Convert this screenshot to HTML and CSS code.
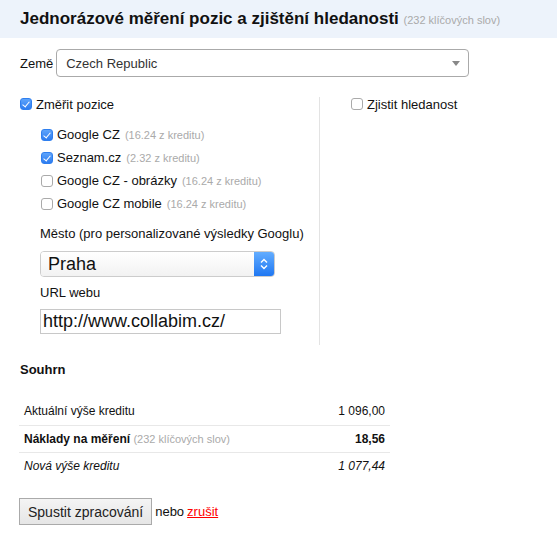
FILE: index.html
```html
<html lang="cs">
<head>
    <meta charset="UTF-8">
    <meta name="viewport" content="width=device-width, initial-scale=1.0">
    <title>Jednorázové měření</title>

    <link rel="stylesheet" href="styles.css">
</head>
<body>

    <div class="header">
        <h2 class="title">Jednorázové měření pozic a zjištění hledanosti <small>(232 klíčových slov)</small></h2>
    </div>

    <form id="form" class="form" autocomplete="off">

        <div class="countryRow">
            <label for="country">Země</label>
            <div class="countrySelect">
                <select id="country">
                    <option>Czech Republic</option>
                </select>
                <span class="arrow"></span>
            </div>
        </div>

        <div class="columns">
            <div class="colLeft">
                <label class="check top"><input type="checkbox" checked> Změřit pozice</label>

                <div class="engines">
                    <label class="check"><input type="checkbox" checked> Google CZ <small>(16.24 z kreditu)</small></label>
                    <label class="check"><input type="checkbox" checked> Seznam.cz <small>(2.32 z kreditu)</small></label>
                    <label class="check"><input type="checkbox"> Google CZ - obrázky <small>(16.24 z kreditu)</small></label>
                    <label class="check"><input type="checkbox"> Google CZ mobile <small>(16.24 z kreditu)</small></label>
                </div>

                <div class="field">
                    <label for="city">Město (pro personalizované výsledky Googlu)</label>
                    <div class="citySelect">
                        <select id="city">
                            <option>Praha</option>
                        </select>
                        <span class="stepper">
                            <svg width="10" height="14" viewBox="0 0 10 14">
                                <path d="M2 5.5 L5 2.5 L8 5.5 M2 8.5 L5 11.5 L8 8.5" fill="none" stroke="#fff" stroke-width="1.4"/>
                            </svg>
                        </span>
                    </div>
                </div>

                <div class="field">
                    <label for="url">URL webu</label>
                    <input type="text" id="url" class="url" value="http://www.collabim.cz/">
                </div>
            </div>

            <div class="colRight">
                <label class="check top"><input type="checkbox"> Zjistit hledanost</label>
            </div>
        </div>

        <h3 class="subtitle">Souhrn</h3>

        <table class="summary">
            <tr>
                <td>Aktuální výše kreditu</td>
                <td class="num">1 096,00</td>
            </tr>
            <tr class="strong">
                <td>Náklady na měření <small>(232 klíčových slov)</small></td>
                <td class="num">18,56</td>
            </tr>
            <tr class="italic">
                <td>Nová výše kreditu</td>
                <td class="num">1 077,44</td>
            </tr>
        </table>

        <div class="actions">
            <input type="submit" id="sub" value="Spustit zpracování">
            nebo <a href="#" class="cancel">zrušit</a>
        </div>

    </form>

</body>
</html>
```

FILE: styles.css
```css
body{
    margin: 0;
    font-family: "Liberation Sans", Arial, sans-serif;
    font-size: 13px;
    color: #111;
    background: #fff;
}
small{color: #aaa;
    font-size: 11px;}

.header{
    height: 38px;
    padding: 0 20px;
    background-color: #edf3fb;
    display: flex;
    align-items: center;
}
.header .title{
    margin: 0;
    font-size: 17px;
    color: #111;
}
.header .title small{font-weight: normal;}

.form{padding: 0 20px;}

.countryRow{
    display: flex;
    align-items: center;
    gap: 3px;
    margin-top: 11px;
}
.countrySelect{
    position: relative;
    width: 413px;
}
.countrySelect select{
    width: 100%;
    height: 28px;
    padding: 0 9px;
    border: 1px solid #aaa;
    border-radius: 4px;
    background: #fff;
    font-family: inherit;
    font-size: 13px;
    color: #333;
    appearance: none;
    outline: none;
}
.countrySelect .arrow{
    position: absolute;
    right: 9px;
    top: 12px;
    border-left: 4px solid transparent;
    border-right: 4px solid transparent;
    border-top: 5px solid #888;
}

.columns{
    display: flex;
    margin-top: 20px;
}
.colLeft{
    width: 299px;
    height: 248px;
    border-right: 1px solid #e3e3e3;
}
.colRight{padding-left: 31px;}

.check{
    display: flex;
    align-items: center;
    height: 23px;
    gap: 4px;
}
.check small{margin-left: 1px;}
.check.top{height: 14px;}
.check input{
    appearance: none;
    margin: 0;
    width: 12px;
    height: 12px;
    border: 1px solid #aaa;
    border-radius: 3px;
    background: #fff;
    position: relative;
}
.check input:checked{
    border-color: #2f7fef;
    background: linear-gradient(#5ea4fb, #2d7cf0);
}
.check input:checked::after{
    content: "";
    position: absolute;
    left: 3px;
    top: 1px;
    width: 3px;
    height: 6px;
    border: solid #fff;
    border-width: 0 1.5px 1.5px 0;
    transform: rotate(40deg);
}

.engines{
    margin: 12px 0 0 21px;
}

.field{margin: 11px 0 0 20px;}
.field label{display: block;
    margin-bottom: 10px;}
.field + .field label{margin-bottom: 9px;}
.field + .field{margin-top: 8px;}

.citySelect{
    display: flex;
    width: 233px;
    height: 24px;
    border: 1px solid #ccc;
    border-radius: 4px;
    overflow: hidden;
}
.citySelect select{
    flex: 1;
    border: none;
    padding: 0 7px;
    background: linear-gradient(#fff, #f2f2f2);
    font-family: inherit;
    font-size: 18px;
    color: #111;
    appearance: none;
    outline: none;
}
.citySelect .stepper{
    width: 20px;
    display: flex;
    align-items: center;
    justify-content: center;
    background: linear-gradient(#63adff, #1f77f2);
}

.url{
    width: 241px;
    height: 25px;
    padding: 0 2px;
    border: 1px solid #c8c8c8;
    font-family: inherit;
    font-size: 18px;
    color: #111;
    outline: none;
    box-sizing: border-box;
}

.subtitle{
    margin: 17px 0 0;
    font-size: 13px;
}

.summary{
    width: 371px;
    margin-top: 21px;
    border-collapse: collapse;
    margin-left: -1px;
    font-size: 12px;
}
.summary td{
    height: 27px;
    padding: 0 5px;
    border-top: 1px solid #e8e8e8;
}
.summary tr:first-child td{border-top: none;}
.summary .num{text-align: right;}
.summary .strong td{font-weight: bold;}
.summary .strong small{font-weight: normal;}
.summary .italic td{font-style: italic;}

.actions{
    margin-top: 19px;
    display: flex;
    align-items: center;
    gap: 3px;
}
#sub{
    height: 27px;
    padding: 0 8px;
    margin-left: -1px;
    border: 1px solid #aaa;
    background: linear-gradient(#f4f4f4, #e6e6e6);
    font-family: inherit;
    font-size: 14px;
    color: #222;
    cursor: pointer;
}
.cancel{color: #f00;}
```
